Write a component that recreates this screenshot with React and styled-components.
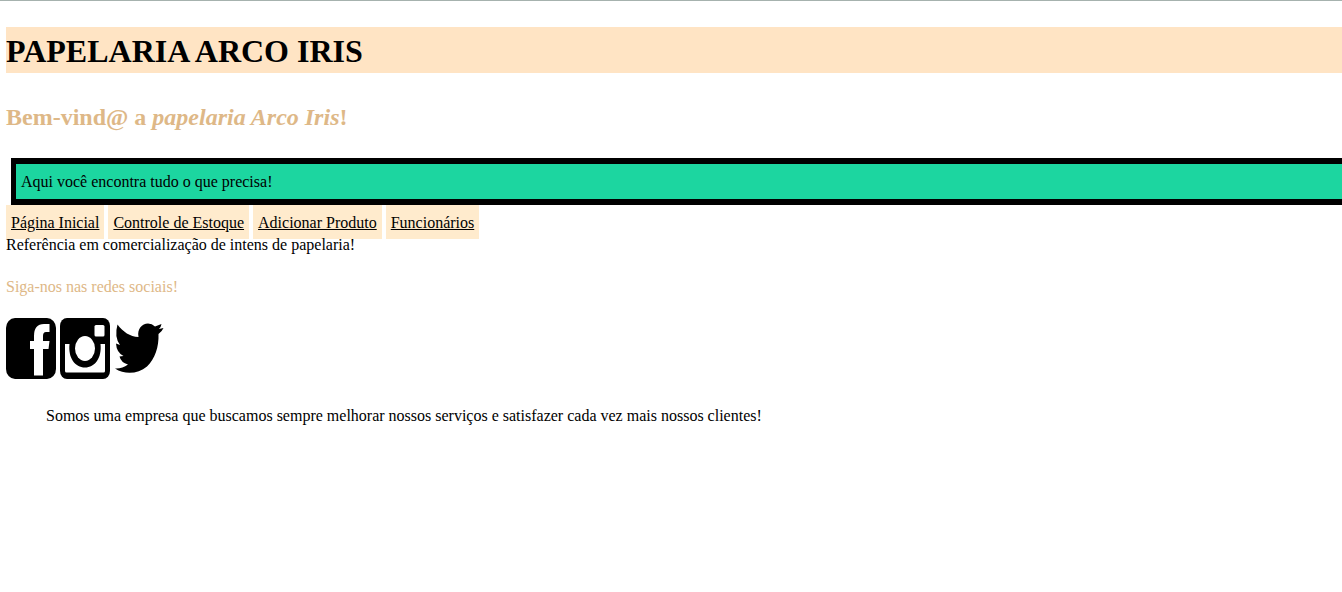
import React from 'react';
import styled, { createGlobalStyle } from 'styled-components';

const GlobalStyle = createGlobalStyle`
  body {
    margin: 0;
    background: #fff;
    color: #000;
    font: 16px/22px "Liberation Serif", "Times New Roman", serif;
  }
`;

const Page = styled.main`
  border-top: 1px solid #a6b2ae;
  padding: 26px 0 0 6px;
`;

const Title = styled.h1`
  margin: 0;
  padding-top: 2px;
  background: bisque;
  font-size: 32px;
  line-height: 44px;
`;

const Welcome = styled.h2`
  margin: 28px 0 24px;
  color: burlywood;
  font-size: 24px;
  line-height: 33px;
`;

const Banner = styled.p`
  margin: 0 0 0 5px;
  padding: 7px 5px 6px;
  border: solid #000;
  border-width: 6px 0 6px 5px;
  background: #1cd6a0;
`;

const Nav = styled.nav`
  display: flex;
  gap: 4px;
`;

const NavLink = styled.a`
  margin-bottom: -5px;
  padding: 7px 5px 5px;
  background: blanchedalmond;
  color: #000;
`;

const Tagline = styled.p`
  position: relative;
  margin: 0;
`;

const Follow = styled.p`
  margin: 20px 0;
  color: burlywood;
`;

const Social = styled.div`
  display: flex;
  gap: 4px;
`;

const SocialLink = styled.a`
  display: flex;
  color: #000;
`;

const Icon = styled.svg`
  width: 50px;
  height: 61px;
`;

const About = styled.blockquote`
  margin: 26px 40px;
`;

const links = ['Página Inicial', 'Controle de Estoque', 'Adicionar Produto', 'Funcionários'];

export default function App() {
  return (
    <Page>
      <GlobalStyle />
      <Title>PAPELARIA ARCO IRIS</Title>
      <Welcome>Bem-vind@ a <em>papelaria Arco Iris</em>!</Welcome>
      <Banner>Aqui você encontra tudo o que precisa!</Banner>
      <Nav>
        {links.map((label) => <NavLink key={label} href="#">{label}</NavLink>)}
      </Nav>
      <Tagline>Referência em comercialização de intens de papelaria!</Tagline>
      <Follow>Siga-nos nas redes sociais!</Follow>
      <Social>
        <SocialLink href="#" aria-label="Facebook">
          <Icon viewBox="0 0 50 61">
            <rect width="50" height="61" rx="9" ry="10" />
            <path fill="#fff" d="M28 57.500V31h-4v-8h4v-5q0-12 10-12h5.500v8h-3.500q-3 0-3 4v5h6.500l-1 8h-5.500v26.500z" />
          </Icon>
        </SocialLink>
        <SocialLink href="#" aria-label="Instagram">
          <Icon viewBox="0 0 50 61">
            <rect width="50" height="61" rx="7" ry="8" />
            <rect x="34.500" y="7" width="10" height="11.500" rx="1.500" fill="#fff" />
            <path fill="#fff" d="M5 26h4.500C8 40 15 49.500 25 49.500S42 40 40.500 26H45v27q0 1.500-1.500 1.500h-37Q5 54.500 5 53z" />
            <ellipse cx="25" cy="30.500" rx="10" ry="12.500" fill="#fff" />
          </Icon>
        </SocialLink>
        <SocialLink href="#" aria-label="Twitter">
          <Icon viewBox="0 0 50 61">
            <path d="M3.500 6.500C9 14 16 18.500 24.500 19C23 11 28 5.500 34 5.500Q38 5.500 41 8.500L47.500 6Q47 9 45 11L49.500 10Q48 13.500 44.500 16C45 29 41 41 33 48.500C24 56 11 57 1 50.500Q8 51 14 46.500Q7 44.500 5.500 38.500L9.500 38Q2.500 34.500 2 25.500L6 27Q0 19 3.500 6.500Z" />
          </Icon>
        </SocialLink>
      </Social>
      <About>Somos uma empresa que buscamos sempre melhorar nossos serviços e satisfazer cada vez mais nossos clientes!</About>
    </Page>
  );
}
